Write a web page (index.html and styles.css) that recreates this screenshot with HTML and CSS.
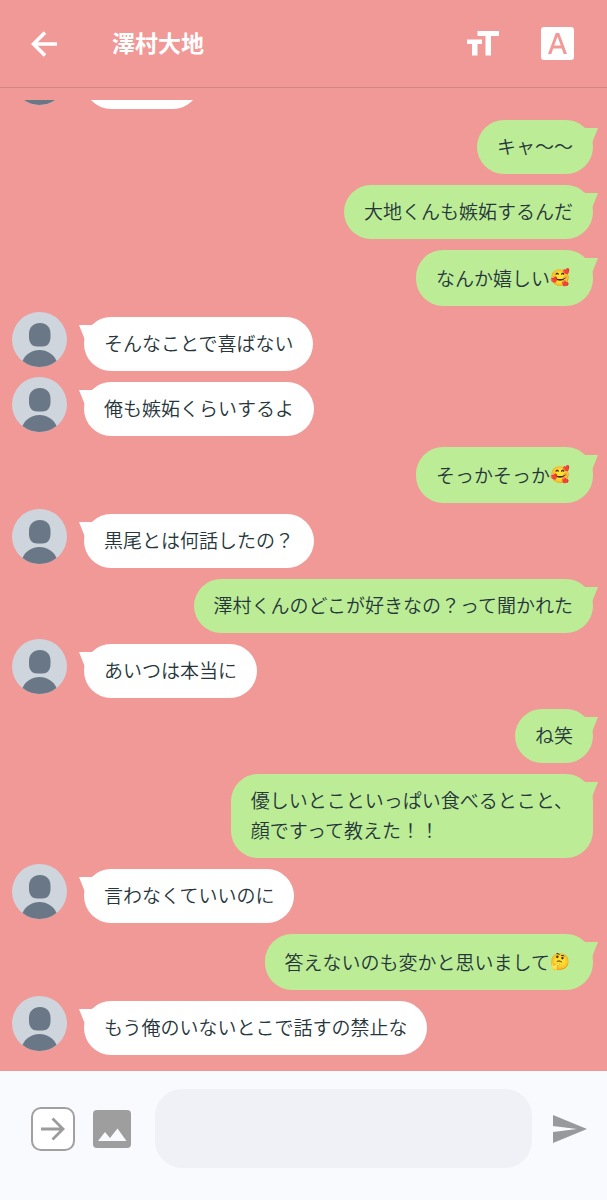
FILE: index.html
```html
<!DOCTYPE html>
<html lang="ja">
<head>
<meta charset="utf-8">
<meta name="viewport" content="width=device-width, initial-scale=1">
<title>澤村大地</title>
<link rel="stylesheet" href="styles.css">
</head>
<body>
<svg class="defs" aria-hidden="true">
  <symbol id="avatar" viewBox="0 0 55 55">
    <circle cx="27.5" cy="27.5" r="27.5" fill="#cfd5dc"/>
    <path d="M28 11C34.500 11 38.500 15 38.500 22V25C38.500 31.500 35 34.500 30.500 34.500H25C20.500 34.500 17 31.500 17 25V22C17 15 21.500 11 28 11Z" fill="#697786"/>
    <path d="M10.500 49C13.500 42 20 38 27.500 38S41.500 42 44.500 49A27.500 27.500 0 0 1 10.500 49Z" fill="#697786"/>
  </symbol>
</svg>

<header class="topbar">
  <a class="back" href="#" aria-label="戻る">
    <svg width="26" height="26" viewBox="0 0 26 26"><path d="M26 13H3M14 1.500L2.500 13L14 24.500" fill="none" stroke="#fff" stroke-width="3.600"/></svg>
  </a>
  <h1>澤村大地</h1>
  <button class="tool" type="button" aria-label="文字サイズ">
    <svg width="32" height="26" viewBox="0 0 32 26"><path d="M10.500 0H32V5H24V24.500H18.500V5H10.500ZM0 8.500H15V13H10.500V24.500H5V13H0Z" fill="#fff"/></svg>
  </button>
  <button class="tool" type="button" aria-label="フォント">
    <svg width="33" height="33" viewBox="0 0 33 33"><path fill-rule="evenodd" d="M3 0H30Q33 0 33 3V30Q33 33 30 33H3Q0 33 0 30V3Q0 0 3 0ZM14.800 6L7 27H10.300L12.200 21.500H20.800L22.700 27H26L18.200 6ZM16.500 9.500L19.800 18.600H13.200Z" fill="#fff"/></svg>
  </button>
</header>

<main class="chat">
  <ol class="messages">
    <li class="row them"><svg class="avatar"><use href="#avatar"/></svg><div class="bubble cut"></div></li>
    <li class="row me"><div class="bubble">キャ〜〜</div></li>
    <li class="row me"><div class="bubble">大地くんも嫉妬するんだ</div></li>
    <li class="row me"><div class="bubble">なんか嬉しい<span class="emoji">🥰</span></div></li>
    <li class="row them"><svg class="avatar"><use href="#avatar"/></svg><div class="bubble">そんなことで喜ばない</div></li>
    <li class="row them"><svg class="avatar"><use href="#avatar"/></svg><div class="bubble">俺も嫉妬くらいするよ</div></li>
    <li class="row me"><div class="bubble">そっかそっか<span class="emoji">🥰</span></div></li>
    <li class="row them"><svg class="avatar"><use href="#avatar"/></svg><div class="bubble">黒尾とは何話したの？</div></li>
    <li class="row me"><div class="bubble">澤村くんのどこが好きなの？って聞かれた</div></li>
    <li class="row them"><svg class="avatar"><use href="#avatar"/></svg><div class="bubble">あいつは本当に</div></li>
    <li class="row me"><div class="bubble">ね笑</div></li>
    <li class="row me"><div class="bubble">優しいとこといっぱい食べるとこと、<br>顔ですって教えた！！</div></li>
    <li class="row them"><svg class="avatar"><use href="#avatar"/></svg><div class="bubble">言わなくていいのに</div></li>
    <li class="row me"><div class="bubble">答えないのも変かと思いまして<span class="emoji">🤔</span></div></li>
    <li class="row them"><svg class="avatar"><use href="#avatar"/></svg><div class="bubble">もう俺のいないとこで話すの禁止な</div></li>
  </ol>
</main>

<form class="composer">
  <button class="switch" type="button" aria-label="切り替え">
    <svg width="24" height="24" viewBox="0 0 24 24"><path d="M0 12H22M11.500 1.500L22 12L11.500 22.500" fill="none" stroke="#9b9b9b" stroke-width="2.800"/></svg>
  </button>
  <button class="photo" type="button" aria-label="画像">
    <svg width="38" height="38" viewBox="0 0 38 38"><rect width="38" height="38" rx="4" fill="#9e9e9e"/><path d="M5 31L12 22L17 28L24.500 18.500L33.500 31Z" fill="#f8fafe"/></svg>
  </button>
  <input class="field" type="text" aria-label="メッセージ">
  <button class="send" type="submit" aria-label="送信">
    <svg width="34" height="30" viewBox="0 0 34 30"><path d="M0 1L34 15L0 29V18L24 15L0 12Z" fill="#97999c"/></svg>
  </button>
</form>
</body>
</html>
```
FILE: styles.css
```css
* {
  box-sizing: border-box;
}

body {
  display: flex;
  flex-direction: column;
  height: 100vh;
  margin: 0;
  background-color: #f09996;
  color: #26363b;
  font-family: "Noto Sans CJK JP", sans-serif;
  font-size: 19px;
  font-weight: 350;
}

button {
  display: flex;
  align-items: center;
  justify-content: center;
  padding: 0;
  border: 0;
  background: none;
}

svg {
  display: block;
  flex: none;
}

.defs {
  position: absolute;
  width: 0;
  height: 0;
}

/* top bar */
.topbar {
  display: flex;
  align-items: center;
  flex: none;
  height: 88px;
  padding: 0 33px 0 31px;
  border-bottom: 1px solid #d38381;
}

.topbar h1 {
  flex: 1;
  margin: 0 0 0 55px;
  padding-bottom: 3px;
  color: #fff;
  font-size: 23px;
  font-weight: 700;
  line-height: 30px;
}

.tool {
  margin-left: 42px;
}

/* messages */
.chat {
  display: flex;
  flex: 1;
  flex-direction: column;
  justify-content: flex-end;
  min-height: 0;
  margin-top: 12px;
  overflow: hidden;
}

.messages {
  display: flex;
  flex-direction: column;
  gap: 11px;
  margin: 0;
  padding: 0 14px 16px 12px;
  list-style: none;
}

.row {
  display: flex;
  align-items: flex-start;
}

.me {
  justify-content: flex-end;
}

.avatar {
  width: 55px;
  height: 55px;
  margin: -5px 17px -4px 0;
}

.bubble {
  position: relative;
  min-height: 54px;
  padding: 11px 20px 13px;
  border-radius: 27px;
  background-color: #fff;
  line-height: 30px;
}

.me .bubble {
  background-color: #bced96;
}

.bubble::before {
  content: "";
  position: absolute;
  top: 8px;
  left: -5px;
  width: 16px;
  height: 16px;
  background-color: inherit;
  clip-path: polygon(0 0, 100% 0, 100% 100%, 40% 100%, 30% 75%);
}

.me .bubble::before {
  right: -5px;
  left: auto;
  clip-path: polygon(0 0, 100% 0, 70% 75%, 60% 100%, 0 100%);
}

.cut {
  width: 116px;
}

.emoji {
  display: inline-block;
  width: 23px;
  height: 32px;
  font-family: "Noto Color Emoji", sans-serif;
  font-size: 16px;
  line-height: 34px;
  vertical-align: bottom;
}

/* composer */
.composer {
  display: flex;
  align-items: center;
  flex: none;
  padding: 18px 20px 32px 31px;
  background-color: #f8fafe;
}

.switch {
  width: 44px;
  height: 44px;
  margin-right: 18px;
  border: 2px solid #a0a0a0;
  border-radius: 10px;
  background-color: #fff;
}

.field {
  flex: 1;
  min-width: 0;
  height: 79px;
  margin: 0 21px 0 24px;
  padding: 0 24px;
  border: 0;
  border-radius: 27px;
  background-color: #f0f1f6;
  font: inherit;
}
```
